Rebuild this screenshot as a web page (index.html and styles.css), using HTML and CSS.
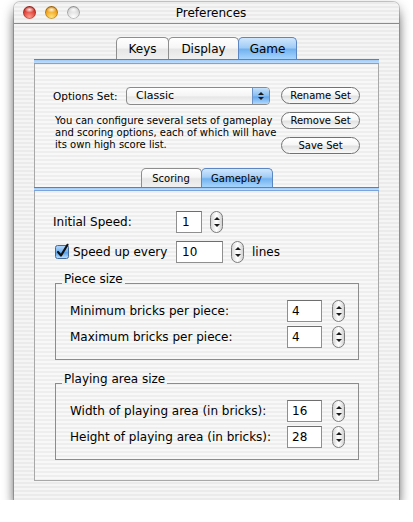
FILE: index.html
```html
<!DOCTYPE html>
<html lang="en">

<head>
  <meta charset="UTF-8">
  <meta name="viewport" content="width=device-width, initial-scale=1.0">
  <link rel="stylesheet" href="styles.css">
  <title>Preferences</title>
</head>

<body>

  <div class="window">
    <div class="titlebar">
      <div class="lights">
        <span class="light light-close"></span>
        <span class="light light-mini"></span>
        <span class="light light-zoom"></span>
      </div>
      <div class="title">Preferences</div>
      <div></div>
    </div>

    <div class="window-body">
      <div class="tabs">
        <div class="tab tab-keys">Keys</div>
        <div class="tab tab-display">Display</div>
        <div class="tab tab-game selected">Game</div>
      </div>

      <div class="tabbox">
        <div class="band"></div>

        <div class="options">
          <div class="options-left">
            <div class="options-row">
              <span class="options-label">Options Set:</span>
              <div class="popup">
                <span class="popup-value">Classic</span>
                <span class="popup-arrows"></span>
              </div>
            </div>
            <p class="note">You can configure several sets of gameplay<br>and scoring options, each of which will have<br>its own high score list.</p>
          </div>
          <div class="options-buttons">
            <div class="btn">Rename Set</div>
            <div class="btn">Remove Set</div>
            <div class="btn">Save Set</div>
          </div>
        </div>

        <div class="subtabs">
          <div class="subtab subtab-scoring">Scoring</div>
          <div class="subtab subtab-gameplay selected">Gameplay</div>
        </div>
        <div class="band band-thin"></div>

        <div class="gameplay">
          <div class="row">
            <span class="row-label">Initial Speed:</span>
            <div class="field field-small">1</div>
            <div class="stepper"></div>
          </div>

          <div class="row row-second">
            <span class="row-label row-check">
              <svg class="checkbox" width="16" height="16" viewBox="0 0 16 16">
                <defs>
                  <linearGradient id="checkFill" x1="0" y1="0" x2="0" y2="1">
                    <stop offset="0" stop-color="#b6d9fb" />
                    <stop offset="0.5" stop-color="#6fb0f0" />
                    <stop offset="0.55" stop-color="#5aa2ea" />
                    <stop offset="1" stop-color="#bfe3ff" />
                  </linearGradient>
                </defs>
                <rect x="0.5" y="2.5" width="13" height="13" rx="2" fill="url(#checkFill)" stroke="#44699c" />
                <path d="M3 9 L6 12.5 L12.5 1.8" fill="none" stroke="#111" stroke-width="2.2" stroke-linecap="round" stroke-linejoin="round" />
              </svg>
              Speed up every
            </span>
            <div class="field field-medium">10</div>
            <div class="stepper"></div>
            <span class="lines">lines</span>
          </div>

          <fieldset class="group group-piece">
            <legend>Piece size</legend>
            <div class="group-row">
              <span class="group-label">Minimum bricks per piece:</span>
              <div class="field field-group">4</div>
              <div class="stepper"></div>
            </div>
            <div class="group-row">
              <span class="group-label">Maximum bricks per piece:</span>
              <div class="field field-group">4</div>
              <div class="stepper"></div>
            </div>
          </fieldset>

          <fieldset class="group group-area">
            <legend>Playing area size</legend>
            <div class="group-row">
              <span class="group-label">Width of playing area (in bricks):</span>
              <div class="field field-group">16</div>
              <div class="stepper"></div>
            </div>
            <div class="group-row">
              <span class="group-label">Height of playing area (in bricks):</span>
              <div class="field field-group">28</div>
              <div class="stepper"></div>
            </div>
          </fieldset>
        </div>
      </div>
    </div>
  </div>

</body>

</html>
```

FILE: styles.css
```css
body {
  margin: 0;
  background-color: #ffffff;
  font-family: "DejaVu Sans", sans-serif;
  font-size: 12px;
  color: #000000;
}

.window {
  width: 385px;
  height: 498px;
  margin: 2px 0 0 14px;
  border-radius: 6px 6px 0 0;
  background: repeating-linear-gradient(to bottom, #ebebeb 0, #ebebeb 2px, #f5f5f5 2px, #f5f5f5 4px);
  box-shadow: 0 0 0 1px rgba(0, 0, 0, 0.18), 0 4px 12px rgba(0, 0, 0, 0.35), 0 11px 12px -2px rgba(0, 0, 0, 0.55);
}

/* title bar */

.titlebar {
  display: grid;
  grid-template-columns: 1fr auto 1fr;
  align-items: center;
  height: 21px;
  padding-left: 9px;
  border-bottom: 1px solid #8c8c8c;
}

.lights {
  display: flex;
  gap: 9px;
}

.light {
  width: 13px;
  height: 13px;
  border-radius: 50%;
  box-shadow: inset 0 0 0 1px rgba(0, 0, 0, 0.25);
}

.light-close {
  background: radial-gradient(ellipse 5px 3px at 50% 28%, rgba(255, 255, 255, 0.9), rgba(255, 255, 255, 0)),
    radial-gradient(circle at 50% 85%, #ff9b8c, #dc3d33 55%, #9c1d15);
}

.light-mini {
  background: radial-gradient(ellipse 5px 3px at 50% 28%, rgba(255, 255, 255, 0.9), rgba(255, 255, 255, 0)),
    radial-gradient(circle at 50% 85%, #ffe37a, #f0a21b 55%, #a86200);
}

.light-zoom {
  background: radial-gradient(ellipse 5px 3px at 50% 28%, rgba(255, 255, 255, 0.9), rgba(255, 255, 255, 0)),
    radial-gradient(circle at 50% 85%, #ffffff, #dadada 55%, #a9a9a9);
}

.title {
  font-size: 12px;
}

/* tabs */

.window-body {
  padding-top: 13px;
}

.tabs,
.subtabs {
  display: flex;
  justify-content: center;
}

.tab,
.subtab {
  box-sizing: border-box;
  display: flex;
  align-items: center;
  justify-content: center;
  border: 1px solid #8e8e8e;
  border-bottom: none;
  border-radius: 5px 5px 0 0;
  background: linear-gradient(to bottom, #ffffff, #f6f6f6 45%, #e6e6e6 55%, #f1f1f1);
}

.tab {
  height: 22px;
  font-size: 12px;
}

.tab + .tab,
.subtab + .subtab {
  margin-left: -1px;
}

.tab-keys {
  width: 53px;
}

.tab-display {
  width: 71px;
}

.tab-game {
  width: 59px;
}

.selected {
  border-color: #5b86c2;
  background: linear-gradient(to bottom, #d0e7fd, #a2cdf7 45%, #72b2f0 55%, #a6d5fd);
}

.tabbox {
  margin: 0 20px;
  border: 1px solid #a8a8a8;
  border-top: none;
  background: repeating-linear-gradient(to bottom, #eeeeee 0, #eeeeee 2px, #f8f8f8 2px, #f8f8f8 4px);
}

.band {
  height: 3px;
  margin: 0 -1px;
  border-top: 1px solid #5582c4;
  border-bottom: 1px solid #7aa4db;
  background: linear-gradient(to bottom, #a3cbf5, #c0defb);
}

.band-thin {
  height: 2px;
}

/* options set */

.options {
  display: flex;
  gap: 11px;
  padding: 23px 18px 0;
}

.options-left {
  width: 217px;
}

.options-row {
  display: flex;
  align-items: center;
}

.options-label {
  width: 73px;
  font-size: 10.5px;
}

.popup {
  box-sizing: border-box;
  display: flex;
  width: 144px;
  height: 18px;
  border: 1px solid #8a8a8a;
  border-radius: 4px;
  background: linear-gradient(to bottom, #ffffff, #f4f4f4 50%, #e6e6e6 55%, #f7f7f7);
  overflow: hidden;
}

.popup-value {
  flex: 1;
  padding-left: 9px;
  font-size: 11px;
  line-height: 16px;
}

.popup-arrows {
  display: flex;
  flex-direction: column;
  align-items: center;
  justify-content: center;
  gap: 2px;
  width: 16px;
  border-left: 1px solid #6b93c8;
  background: linear-gradient(to bottom, #c3e0fb, #86bdf1 50%, #65a7ec 55%, #b0d9fd);
}

.popup-arrows::before,
.popup-arrows::after,
.stepper::before,
.stepper::after {
  content: '';
  width: 0;
  height: 0;
  border-left: 3px solid transparent;
  border-right: 3px solid transparent;
}

.popup-arrows::before,
.stepper::before {
  border-bottom: 3px solid #1a1a1a;
}

.popup-arrows::after,
.stepper::after {
  border-top: 3px solid #1a1a1a;
}

.note {
  margin: 10px 0 0 2px;
  font-size: 10px;
  line-height: 12px;
  white-space: nowrap;
}

.options-buttons {
  display: flex;
  flex-direction: column;
  gap: 8px;
}

.btn {
  box-sizing: border-box;
  width: 79px;
  height: 17px;
  border: 1px solid #727272;
  border-radius: 9px;
  background: linear-gradient(to bottom, #ffffff, #f7f7f7 45%, #e2e2e2 55%, #f9f9f9);
  font-size: 10px;
  line-height: 15px;
  text-align: center;
}

/* sub tabs */

.subtabs {
  margin-top: 14px;
}

.subtab {
  height: 19px;
  font-size: 10px;
}

.subtab-scoring {
  width: 61px;
}

.subtab-gameplay {
  width: 72px;
}

/* gameplay */

.gameplay {
  padding: 20px 18px 20px;
}

.row {
  display: flex;
  align-items: center;
  height: 22px;
}

.row-second {
  margin-top: 8px;
}

.row-label {
  width: 123px;
}

.row-check {
  display: flex;
  align-items: center;
  gap: 2px;
  padding-left: 2px;
  box-sizing: border-box;
}

.checkbox {
  margin-top: -3px;
}

.field {
  box-sizing: border-box;
  height: 22px;
  padding-left: 5px;
  border: 1px solid #8f8f8f;
  border-top-color: #6e6e6e;
  background-color: #ffffff;
  line-height: 20px;
}

.field-small {
  width: 26px;
}

.field-medium {
  width: 47px;
}

.field-group {
  width: 35px;
  padding-left: 4px;
}

.stepper {
  box-sizing: border-box;
  display: flex;
  flex-direction: column;
  align-items: center;
  justify-content: space-between;
  width: 13px;
  height: 22px;
  margin-left: 8px;
  padding: 5px 0;
  border: 1px solid #7c7c7c;
  border-radius: 7px;
  background: linear-gradient(to right, #d6d6d6, #fdfdfd 45%, #fdfdfd 55%, #d2d2d2);
}

.lines {
  margin-left: 8px;
}

.group {
  margin: 9px 1px 0 2px;
  padding: 6px 13px 11px 14px;
  border: 1px solid #8c8c8c;
}

.group-area {
  margin-top: 12px;
}

.group legend {
  margin-left: -8px;
  padding: 0 2px 8px;
  line-height: 14px;
}

.group-row {
  display: flex;
  align-items: center;
  height: 22px;
}

.group-row + .group-row {
  margin-top: 4px;
}

.group-label {
  flex: 1;
}

.group .stepper {
  margin-left: 10px;
}
```
